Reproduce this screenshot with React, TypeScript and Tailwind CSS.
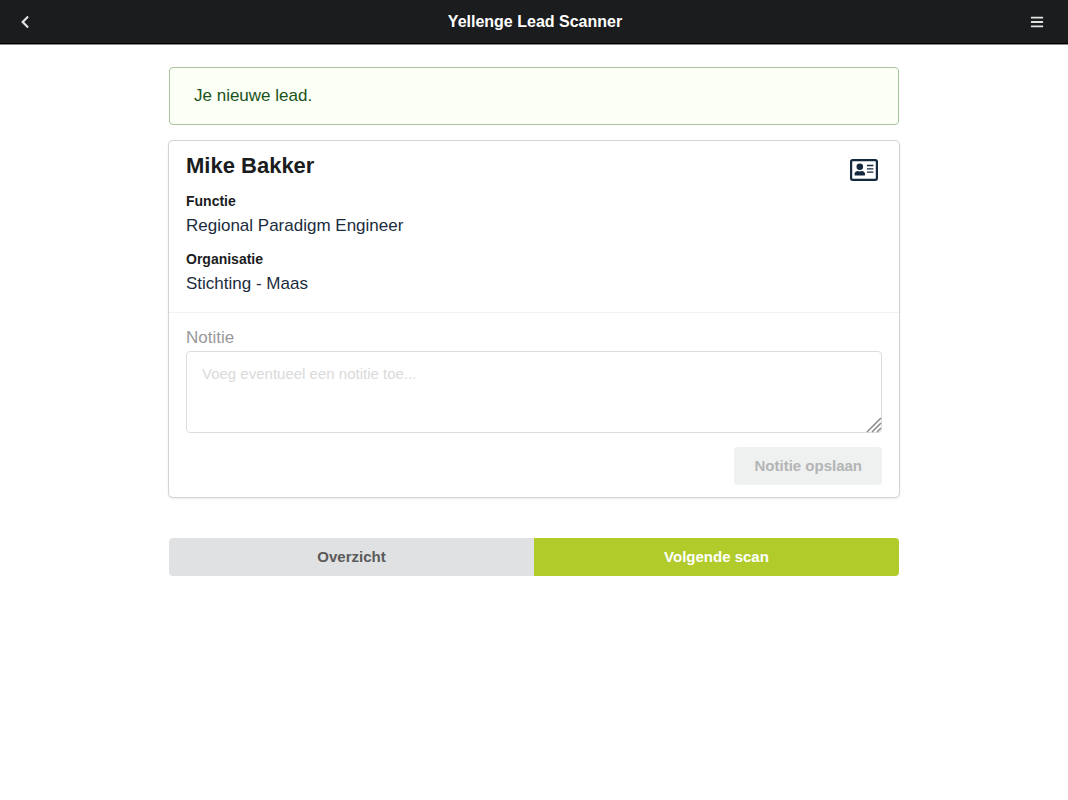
import React, { useState } from 'react';
import { FaBars, FaChevronLeft } from 'react-icons/fa';

const lead = {
    name: 'Mike Bakker',
    details: [
        { label: 'Functie', value: 'Regional Paradigm Engineer' },
        { label: 'Organisatie', value: 'Stichting - Maas' },
    ],
};

function AddressCardIcon({ className }: { className?: string }) {
    return (
        <svg className={className} viewBox="0 0 28 22" fill="none" stroke="currentColor" aria-hidden="true">
            <rect x="1.1" y="1.1" width="25.8" height="19.8" rx="1.6" strokeWidth="2.2" />
            <circle cx="9.8" cy="7.7" r="3.3" fill="currentColor" stroke="none" />
            <path
                d="M4.5 15.6c0-2.100 1.500-3.500 3.300-3.500.7 0 1.100.3 2 .3s1.300-.3 2-.3c1.800 0 3.300 1.400 3.300 3.500 0 .6-.4 1-1 1h-8.600c-.6 0-1-.4-1-1z"
                fill="currentColor"
                stroke="none"
            />
            <path d="M17 6.500h6.400M17 9.800h6.400M17 13.100h6.400" strokeWidth="1.300" />
        </svg>
    );
}

function TopBar() {
    return (
        <header className="flex h-11 items-center justify-between border-b border-black bg-[#1b1c1d] px-5 text-[#e2e2e2] shadow-[0_1px_0_#8a8a8a]">
            <button type="button" aria-label="Terug" className="w-5">
                <FaChevronLeft className="h-[14px] w-[10px]" />
            </button>
            <h1 className="text-base leading-5 font-bold text-white">Yellenge Lead Scanner</h1>
            <button type="button" aria-label="Menu" className="mr-1 w-[14px]">
                <FaBars className="size-[14px]" />
            </button>
        </header>
    );
}

function LeadDetails() {
    return (
        <div className="flex items-start justify-between border-b border-[#f1f1f1] px-[17px] pt-3 pb-[15px]">
            <div>
                <h2 className="text-[22px] leading-[26px] font-bold text-[#1b1c1d]">{lead.name}</h2>
                <dl className="mt-[10px] space-y-2">
                    {lead.details.map((item) => (
                        <div key={item.label}>
                            <dt className="text-[14px] leading-6 font-bold text-[#1b1c1d]">{item.label}</dt>
                            <dd className="text-[17px] leading-[26px] text-[#1b2c40]">{item.value}</dd>
                        </div>
                    ))}
                </dl>
            </div>
            <button type="button" aria-label="Contactkaart" className="mt-[6px] mr-1 text-[#14293d]">
                <AddressCardIcon className="h-[22px] w-7" />
            </button>
        </div>
    );
}

function NoteForm() {
    const [note, setNote] = useState('');

    return (
        <form className="px-[17px] pt-3 pb-3" onSubmit={(e) => e.preventDefault()}>
            <label htmlFor="note" className="block text-[17px] leading-[26px] text-[#999]">
                Notitie
            </label>
            <div className="relative">
                <textarea
                    id="note"
                    value={note}
                    onChange={(e) => setNote(e.target.value)}
                    placeholder="Voeg eventueel een notitie toe..."
                    className="block h-[82px] w-full resize-none rounded border border-[#dcdddd] px-[15px] py-3 text-[15px] leading-5 text-[#1b2c40] placeholder:text-[#dadada]"
                />
                <svg
                    className="pointer-events-none absolute right-0 bottom-0 size-4 text-[#8d8d8d]"
                    viewBox="0 0 16 16"
                    fill="none"
                    stroke="currentColor"
                    strokeWidth="1.6"
                    aria-hidden="true"
                >
                    <path d="M1 15 15 1M6 15l9-9M11 15l4-4" />
                </svg>
            </div>
            <div className="mt-[14px] flex justify-end">
                <button
                    type="submit"
                    disabled={!note}
                    className="h-[38px] rounded bg-[#eff0f0] px-5 text-[15px] leading-5 font-bold text-[#b3b5b5]"
                >
                    Notitie opslaan
                </button>
            </div>
        </form>
    );
}

export default function App() {
    return (
        <div className="min-h-screen bg-white font-['Liberation_Sans',Arial,sans-serif]">
            <TopBar />
            <main className="mx-auto mt-[23px] max-w-[762px] px-4">
                <div role="status" className="rounded border border-[#a9c2a0] bg-[#fcfff5] px-6 py-4 text-[17px] leading-6 text-[#1a531b]">
                    Je nieuwe lead.
                </div>

                <section className="mt-4 rounded shadow-[0_0_0_1px_#d4d4d5,0_1px_3px_#d4d4d5]">
                    <LeadDetails />
                    <NoteForm />
                </section>

                <div className="mt-[41px] grid grid-cols-2 overflow-hidden rounded text-[15px] leading-5 font-bold">
                    <button type="button" className="h-[38px] bg-[#e0e1e2] text-[#5a5a5a]">
                        Overzicht
                    </button>
                    <button type="button" className="h-[38px] bg-[#b0cb2a] text-white">
                        Volgende scan
                    </button>
                </div>
            </main>
        </div>
    );
}
